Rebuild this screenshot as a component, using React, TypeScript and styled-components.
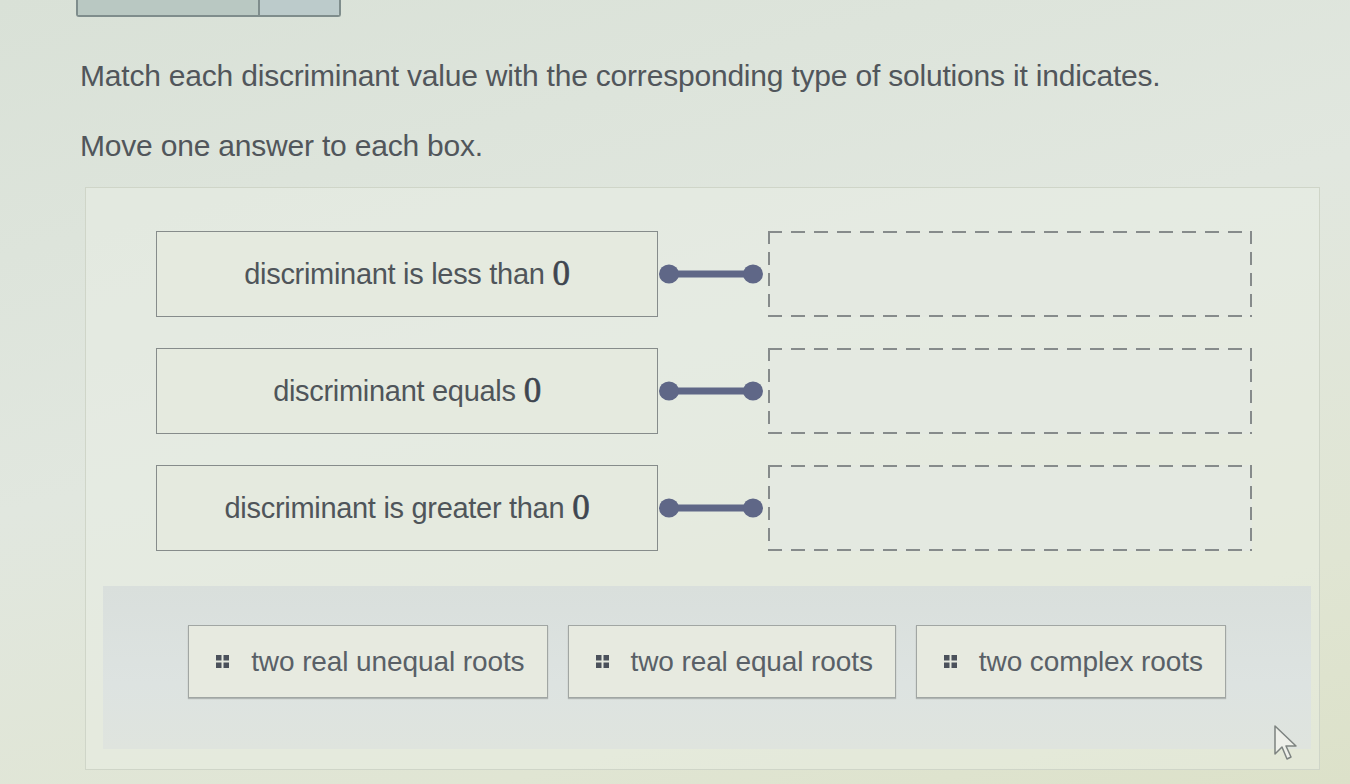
import styled, { createGlobalStyle } from 'styled-components'

const GlobalStyle = createGlobalStyle`
  html, body {
    margin: 0;
    padding: 0;
  }
  body {
    font-family: "Liberation Sans", Arial, sans-serif;
    background: linear-gradient(165deg, #d9e1d7 0%, #e1e7df 45%, #e0e5d3 80%, #dce1c9 100%);
    min-height: 784px;
    overflow: hidden;
  }
`

const Page = styled.div`
  position: relative;
  width: 1350px;
  height: 784px;
  padding-left: 76px;
  box-sizing: border-box;
`

const TabGroup = styled.div`
  display: flex;
  width: 265px;
  height: 17px;
  box-sizing: border-box;
  border: 2px solid #7f8d8c;
  border-top: none;
  border-radius: 0 0 3px 3px;
  overflow: hidden;
`

const Tab = styled.div<{ $w: number; $tint: string }>`
  width: ${p => p.$w}px;
  background: ${p => p.$tint};
  & + & {
    border-left: 2px solid #7f8d8c;
  }
`

const Prompt = styled.p<{ $top: number }>`
  margin: ${p => p.$top}px 0 0 4px;
  font-size: 30px;
  line-height: 36px;
  color: #51565b;
  letter-spacing: -0.2px;
`

const Panel = styled.div`
  margin: 23px 0 0 9px;
  width: 1235px;
  box-sizing: border-box;
  border: 1px solid #cfd5c8;
  background: rgba(236, 240, 230, 0.45);
  padding: 43px 8px 20px 17px;
`

const Rows = styled.div`
  display: flex;
  flex-direction: column;
  gap: 31px;
  padding-left: 53px;
`

const Row = styled.div`
  display: flex;
  align-items: center;
`

const Zero = styled.span`
  font-family: "Liberation Serif", "DejaVu Serif", serif;
  font-size: 35px;
  color: #3f4650;
  margin-left: 8px;
  -webkit-text-stroke: 0.6px #3f4650;
`

const Term = styled.div`
  width: 502px;
  height: 86px;
  box-sizing: border-box;
  border: 1.5px solid #868c8b;
  background: #e5eadf;
  display: flex;
  align-items: center;
  justify-content: center;
  font-size: 29px;
  color: #4f555a;
  letter-spacing: -0.3px;
`

const Link = styled.svg`
  display: block;
  width: 110px;
  height: 24px;
  flex: none;
`

const Drop = styled.div`
  width: 484px;
  height: 86px;
  box-sizing: border-box;
  background:
    repeating-linear-gradient(90deg, #868b8b 0 14px, transparent 14px 23px) top left / 100% 2px no-repeat,
    repeating-linear-gradient(90deg, #868b8b 0 14px, transparent 14px 23px) bottom left / 100% 2px no-repeat,
    repeating-linear-gradient(180deg, #868b8b 0 13px, transparent 13px 21px) top left / 2px 100% no-repeat,
    repeating-linear-gradient(180deg, #868b8b 0 13px, transparent 13px 21px) top right / 2px 100% no-repeat,
    #e4e9e1;
`

const Bank = styled.div`
  margin-top: 35px;
  height: 163px;
  box-sizing: border-box;
  background: linear-gradient(180deg, #d9dfdc 0%, #dde3e1 60%, #dfe4de 100%);
  display: flex;
  justify-content: center;
  align-items: flex-start;
  gap: 20px;
  padding-top: 39px;
`

const Chip = styled.div`
  height: 73px;
  box-sizing: border-box;
  display: flex;
  align-items: center;
  gap: 22px;
  padding: 0 22px 0 27px;
  border: 1.5px solid #a1a6a3;
  background: #e7eae0;
  box-shadow: 0 1px 1px rgba(90, 95, 95, 0.35);
  font-size: 28px;
  color: #596067;
  letter-spacing: -0.1px;
`

const Grip = styled.svg`
  width: 13px;
  height: 13px;
  flex: none;
`

const Pointer = styled.svg`
  position: absolute;
  left: 1273px;
  top: 724px;
  width: 26px;
  height: 40px;
`

const terms = ['discriminant is less than', 'discriminant equals', 'discriminant is greater than']
const answers = ['two real unequal roots', 'two real equal roots', 'two complex roots']

const Connector = () => (
  <Link viewBox="0 0 110 24">
    <line x1="11" y1="12" x2="95" y2="12" stroke="#5f6787" strokeWidth="7" />
    <ellipse cx="11" cy="12" rx="10" ry="9.5" fill="#5f6787" />
    <ellipse cx="95" cy="12" rx="10" ry="9.5" fill="#5f6787" />
  </Link>
)

const GripIcon = () => (
  <Grip viewBox="0 0 13 13">
    <rect x="0" y="0" width="5.5" height="5.5" fill="#4b515b" />
    <rect x="7.5" y="0" width="5.5" height="5.5" fill="#4b515b" />
    <rect x="0" y="7.5" width="5.5" height="5.5" fill="#4b515b" />
    <rect x="7.5" y="7.5" width="5.5" height="5.5" fill="#4b515b" />
  </Grip>
)

export default function App() {
  return (
    <Page>
      <GlobalStyle />
      <TabGroup>
        <Tab $w={184} $tint="#b9c8c2" />
        <Tab $w={81} $tint="#bccbcb" />
      </TabGroup>
      <Prompt $top={41}>Match each discriminant value with the corresponding type of solutions it indicates.</Prompt>
      <Prompt $top={34}>Move one answer to each box.</Prompt>
      <Panel>
        <Rows>
          {terms.map(t => (
            <Row key={t}>
              <Term>
                {t}
                <Zero>0</Zero>
              </Term>
              <Connector />
              <Drop />
            </Row>
          ))}
        </Rows>
        <Bank>
          {answers.map(a => (
            <Chip key={a}>
              <GripIcon />
              {a}
            </Chip>
          ))}
        </Bank>
      </Panel>
      <Pointer viewBox="0 0 26 40">
        <path
          d="M2 2 L2 30 L9 23 L14 35 L18 33 L13 22 L23 22 Z"
          fill="#eef0ea"
          stroke="#7d8380"
          strokeWidth="1.5"
          strokeLinejoin="round"
        />
      </Pointer>
    </Page>
  )
}
